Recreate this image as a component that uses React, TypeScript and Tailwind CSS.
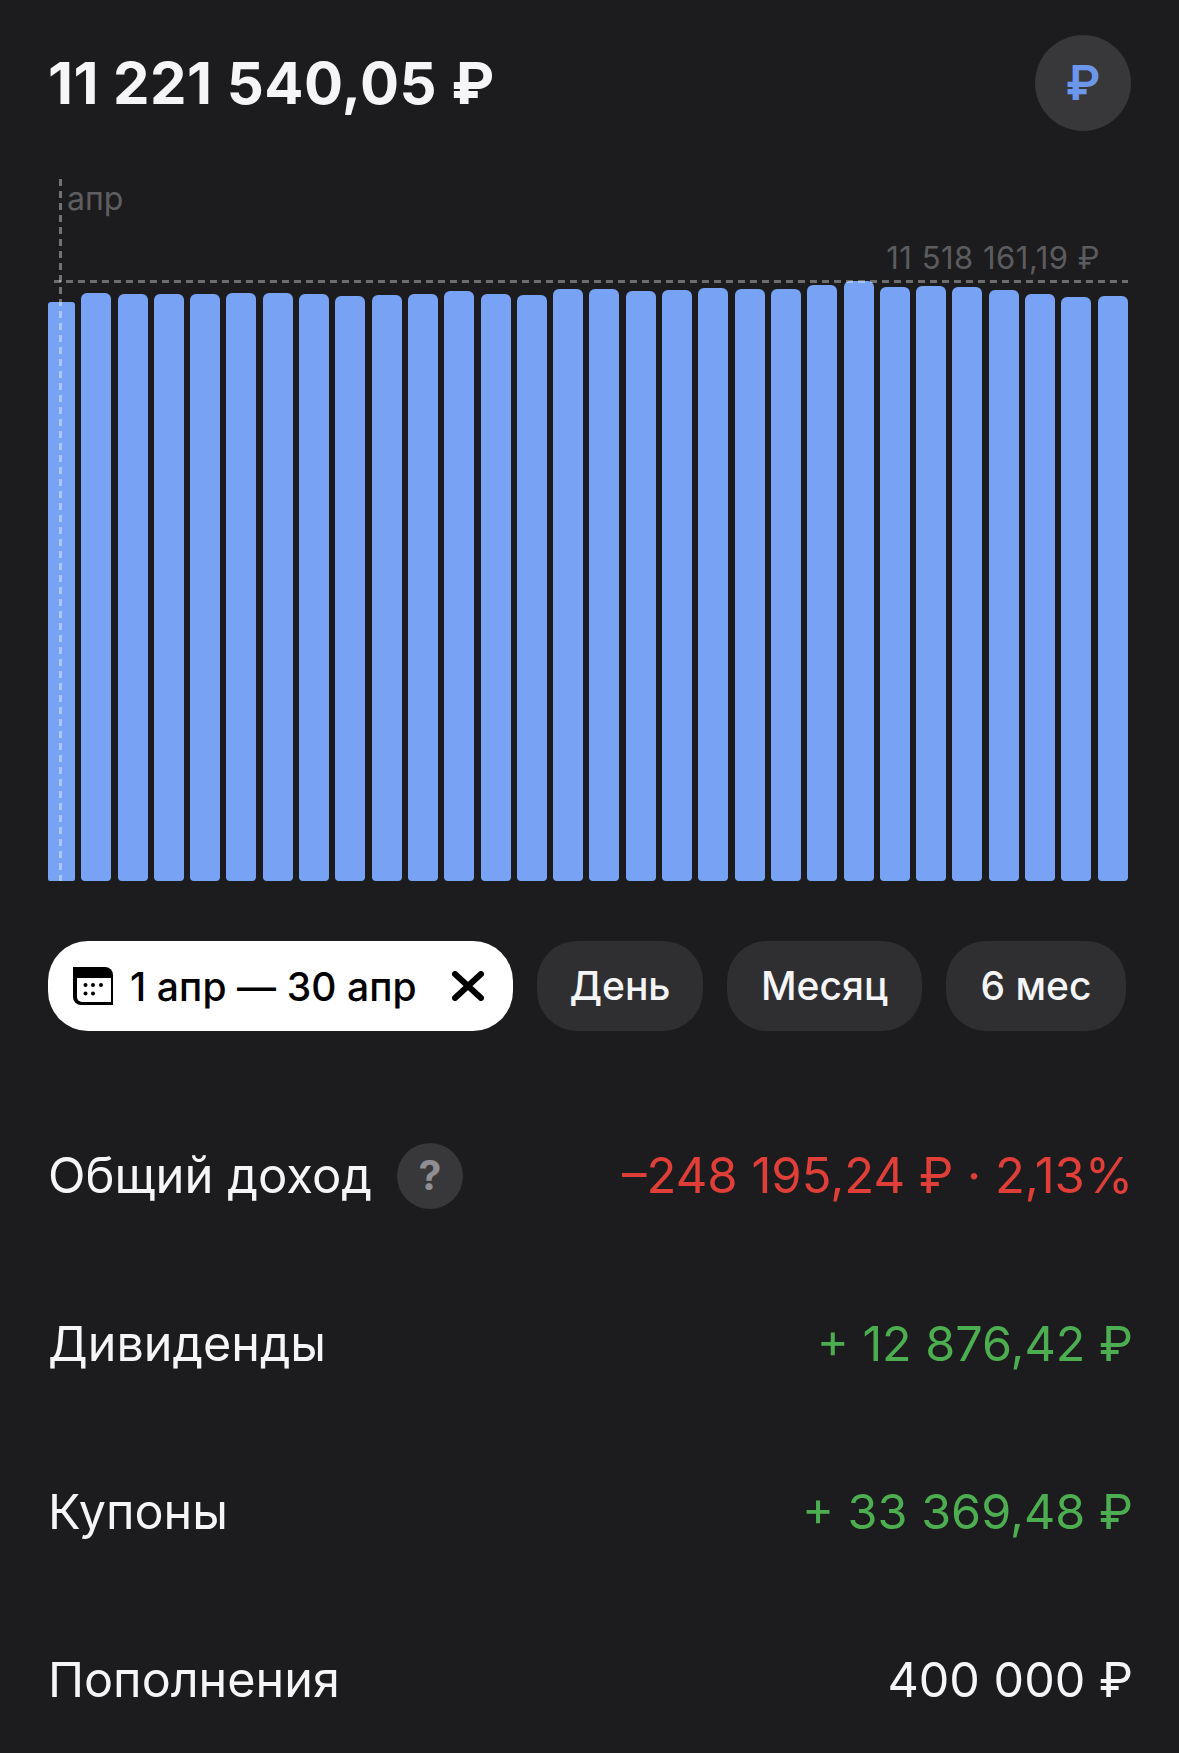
const barTops = [
  302, 293, 294, 294, 294, 293, 293, 294, 296, 295, 294, 291, 294, 295, 289,
  289, 291, 290, 288, 289, 289, 285, 281, 287, 286, 287, 290, 294, 297, 296,
];

const rows = [
  { label: "Дивиденды", value: "+ 12 876,42 ₽", color: "text-[#4cae50]" },
  { label: "Купоны", value: "+ 33 369,48 ₽", color: "text-[#4cae50]" },
  { label: "Пополнения", value: "400 000 ₽", color: "text-[#f5f5f7]" },
];

function CalendarIcon() {
  return (
    <svg width="40" height="38" viewBox="0 0 40 38" className="shrink-0">
      <path d="M0 0H32a8 8 0 0 1 8 8V38H8a8 8 0 0 1-8-8z" fill="#000" />
      <path d="M4 11H38V35H9a5 5 0 0 1-5-5z" fill="#fff" />
      <circle cx="12.5" cy="18" r="2" fill="#000" />
      <circle cx="20" cy="18" r="2" fill="#000" />
      <circle cx="28" cy="18" r="2" fill="#000" />
      <circle cx="12.5" cy="26.5" r="2" fill="#000" />
      <circle cx="20" cy="26.5" r="2" fill="#000" />
    </svg>
  );
}

function CloseIcon() {
  return (
    <svg width="32" height="30" viewBox="0 0 32 30" className="shrink-0">
      <path d="M3 3l26 24M29 3L3 27" stroke="#000" strokeWidth="6" strokeLinecap="round" />
    </svg>
  );
}

export default function App() {
  return (
    <div className="h-[1753px] overflow-hidden bg-[#1c1c1e] pl-[48px] pr-[48px] pt-[35px] font-['Inter',sans-serif] text-[#f5f5f7]">
      <header className="flex items-center justify-between">
        <div className="text-[58px] font-bold leading-none tracking-[0.45px]">11 221 540,05 ₽</div>
        <div className="flex h-[96px] w-[96px] items-center justify-center rounded-full bg-[#38383a] text-[48px] font-semibold text-[#6b96ea]">
          ₽
        </div>
      </header>

      <div className="relative mr-[3px] mt-[48px] flex h-[702px] items-end justify-between">
        {barTops.map((top, i) => (
          <div
            key={i}
            className={i === 0 ? "w-[27px] rounded-t-[3px] rounded-b-[2px] bg-[#78a3f4]" : "w-[30px] rounded-t-[6px] rounded-b-[4px] bg-[#78a3f4]"}
            style={{ height: 881 - top }}
          />
        ))}
        <div className="absolute bottom-0 left-[11px] top-0 w-[3px] bg-[repeating-linear-gradient(180deg,rgba(255,255,255,0.38)_0_7px,transparent_7px_12px)]" />
        <div className="absolute left-[6px] right-0 top-[101px] h-[3px] bg-[repeating-linear-gradient(90deg,rgba(255,255,255,0.36)_0_7px,transparent_7px_12px)]" />
        <div className="absolute left-[19px] top-0 text-[32px] leading-[40px] text-[#5e5e60]">апр</div>
        <div className="absolute right-[28px] top-[61px] text-[31px] leading-[36px] tracking-[0.5px] text-[#5c5c5e]">11 518 161,19 ₽</div>
      </div>

      <div className="mt-[60px] flex items-center gap-[24px]">
        <div className="flex h-[90px] w-[465px] items-center rounded-[40px] bg-white pl-[25px] text-black">
          <CalendarIcon />
          <span className="ml-[17px] text-[39px] font-medium leading-none tracking-[0.1px]">1 апр — 30 апр</span>
          <span className="ml-auto mr-[29px]">
            <CloseIcon />
          </span>
        </div>
        <div className="flex h-[90px] w-[166px] items-center justify-center rounded-[40px] bg-[#2f2f31] text-[39px] font-medium">День</div>
        <div className="flex h-[90px] w-[195px] items-center justify-center rounded-[40px] bg-[#2f2f31] text-[39px] font-medium">Месяц</div>
        <div className="flex h-[90px] w-[180px] items-center justify-center rounded-[40px] bg-[#2f2f31] text-[39px] font-medium">6 мес</div>
      </div>

      <div className="-mr-[2px] mt-[61px]">
        <div className="flex h-[168px] items-center justify-between text-[49px]">
          <div className="flex items-center">
            <span>Общий доход</span>
            <span className="ml-[25px] flex h-[66px] w-[66px] items-center justify-center rounded-full bg-[#38383a] text-[41px] font-bold text-[#8e8e93]">?</span>
          </div>
          <span className="text-[#df3f38]">–248 195,24 ₽ · 2,13%</span>
        </div>
        {rows.map((row) => (
          <div key={row.label} className="flex h-[168px] items-center justify-between text-[48.5px]">
            <span>{row.label}</span>
            <span className={row.color}>{row.value}</span>
          </div>
        ))}
      </div>
    </div>
  );
}
